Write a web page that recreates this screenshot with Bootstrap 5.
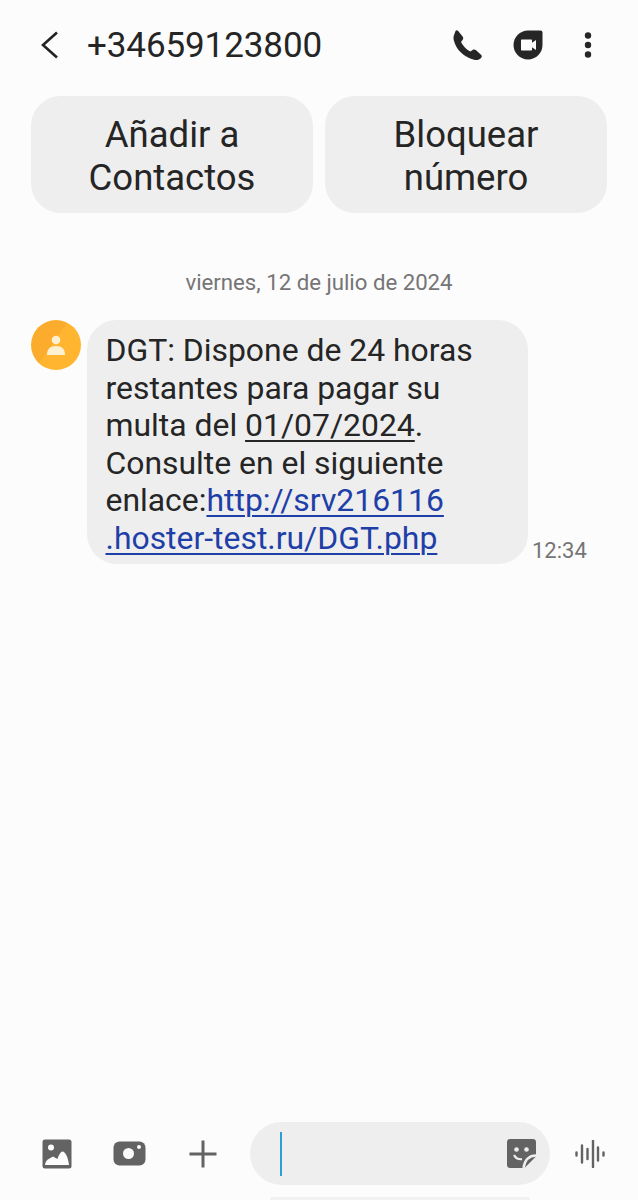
<!DOCTYPE html>
<html lang="es">
<head>
  <meta charset="UTF-8">
  <meta name="viewport" content="width=device-width, initial-scale=1.0">
  <title>Mensajes</title>
  <link href="https://cdn.jsdelivr.net/npm/bootstrap@5.3.0/dist/css/bootstrap.min.css" rel="stylesheet">
  <style>
    body {
      background: #fcfcfc;
      font-family: Roboto, "Liberation Sans", sans-serif;
      color: #252525;
      overflow: hidden;
    }
    .screen {
      height: 1200px;
      position: relative;
    }
    .top-bar {
      height: 90px;
      padding: 0 45px 0 39px;
    }
    .phone-title {
      font-size: 35px;
      line-height: 1;
      margin-left: 28px;
      letter-spacing: -0.1px;
    }
    .top-icons {
      gap: 30px;
    }
    .menu-dots {
      margin-left: 10px;
    }
    .action-row {
      padding: 6px 31px 0;
      gap: 12px;
    }
    .action-btn {
      width: 282px;
      height: 117px;
      background: #eeeeee;
      border: 0;
      border-radius: 30px;
      font-size: 36.5px;
      line-height: 43px;
      color: #252525;
      padding: 3px 20px 0;
    }
    .date-line {
      font-size: 22.2px;
      line-height: 26px;
      color: #757575;
      margin-top: 56px;
      text-align: center;
    }
    .msg-row {
      padding-left: 31px;
      margin-top: 25px;
    }
    .avatar {
      width: 50px;
      height: 50px;
      border-radius: 50%;
      background: linear-gradient(125deg, #fbac2c 0 45%, #ffb52f 45%);
      flex: none;
    }
    .bubble {
      width: 441px;
      height: 244px;
      margin-left: 6px;
      background: #eeeeee;
      border-radius: 30px;
      padding: 12px 0 0 18.5px;
      font-size: 31.9px;
      line-height: 37.6px;
      white-space: nowrap;
    }
    .bubble u {
      text-underline-offset: 4px;
      text-decoration-thickness: 2px;
    }
    .bubble a {
      color: #1f3fa8;
      text-underline-offset: 4px;
      text-decoration-thickness: 2px;
    }
    .msg-time {
      font-size: 22px;
      line-height: 26px;
      color: #757575;
      margin-left: 4px;
    }
    .composer {
      position: absolute;
      left: 0;
      right: 0;
      bottom: 15px;
      height: 63px;
      padding-left: 42px;
    }
    .composer-icons {
      gap: 41px;
    }
    .plus-icon {
      margin-left: 2px;
    }
    .input-pill {
      width: 300px;
      height: 63px;
      margin-left: 33px;
      background: #eeeeee;
      border-radius: 32px;
      padding: 0 14px 0 30px;
    }
    .text-cursor {
      width: 2px;
      height: 44px;
      background: #2a9fd0;
    }
    .voice-icon {
      margin-left: 25px;
    }
    .next-sliver {
      position: absolute;
      left: 270px;
      bottom: 0;
      width: 260px;
      height: 3px;
      background: #f1f1f1;
      border-radius: 3px 3px 0 0;
    }
  </style>
</head>
<body>
  <div class="screen">
    <div class="top-bar d-flex align-items-center">
      <svg width="20" height="28" viewBox="0 0 20 28"><path d="M18 1.5 4 14l14 12.5" fill="none" stroke="#222" stroke-width="2.6"/></svg>
      <div class="phone-title flex-grow-1">+34659123800</div>
      <div class="top-icons d-flex align-items-center">
        <svg width="30" height="30" viewBox="0 0 30 30"><path d="M5 .8 9.600 6.600c.8 1 .8 2.200.1 3.100L8 12c1.500 3.400 5.200 7.400 9.300 9.600l2.300-1.700c1-.7 2.300-.6 3.200.2l5.200 4.600c1 .9 1 2.300 0 3.300l-1.200 1c-1.300 1-3 1.400-4.800.9C10.500 27.300 3.200 19.500.8 10.200.2 7.600.5 5.700 1.500 3.800L2.400 1.200C3 0 4.200 0 5 .8Z" fill="#262626"/></svg>
        <svg width="30" height="30" viewBox="0 0 30 30"><path d="M15 .5h12.500c1.100 0 2 .9 2 2V15c0 8-6.500 14.500-14.500 14.500S.5 23 .5 15 7 .5 15 .5Z" fill="#262626"/><path d="M8 10.500c0-.6.4-1 1-1h9c.6 0 1 .4 1 1v2.300l4-2.800v10l-4-2.800v2.300c0 .6-.4 1-1 1H9c-.6 0-1-.4-1-1Z" fill="#fcfcfc"/></svg>
        <svg class="menu-dots" width="10" height="30" viewBox="0 0 10 30"><circle cx="5" cy="5.500" r="3.200" fill="#262626"/><circle cx="5" cy="15" r="3.200" fill="#262626"/><circle cx="5" cy="24.500" r="3.200" fill="#262626"/></svg>
      </div>
    </div>

    <div class="action-row d-flex">
      <button class="action-btn" type="button">Añadir a<br>Contactos</button>
      <button class="action-btn" type="button">Bloquear<br>número</button>
    </div>

    <div class="date-line">viernes, 12 de julio de 2024</div>

    <div class="msg-row d-flex align-items-start">
      <div class="avatar d-flex align-items-center justify-content-center">
        <svg width="18" height="20" viewBox="0 0 18 20"><circle cx="9" cy="5" r="4.300" fill="#fff0d2"/><path d="M0 20c0-6 3-9 9-9s9 3 9 9Z" fill="#fff0d2"/></svg>
      </div>
      <div class="bubble">DGT: Dispone de 24 horas<br>restantes para pagar su<br>multa del <u>01/07/2024</u>.<br>Consulte en el siguiente<br>enlace:<a href="#">http://srv216116<br>.hoster-test.ru/DGT.php</a></div>
      <div class="msg-time align-self-end">12:34</div>
    </div>

    <div class="composer d-flex align-items-center">
      <div class="composer-icons d-flex align-items-center">
        <svg width="30" height="30" viewBox="0 0 30 30"><rect x=".5" y=".5" width="29" height="29" rx="2.500" fill="#636363"/><circle cx="9" cy="8.500" r="3" fill="#fcfcfc"/><path d="M3 26c.2-3 2-5.300 4.500-6.500C9.500 18.500 10 18 11 17.500c1.800 1 3.500 2 4.500 2.500 1-3 3-7.500 5-7.500 3 0 6 7 6.500 13.500Z" fill="#fcfcfc"/></svg>
        <svg width="33" height="25" viewBox="0 0 33 25"><rect x=".5" y=".5" width="32" height="24" rx="6" fill="#636363"/><circle cx="15.500" cy="12.500" r="5.500" fill="#fcfcfc"/><circle cx="26" cy="6" r="2" fill="#fcfcfc"/></svg>
        <svg class="plus-icon" width="28" height="28" viewBox="0 0 28 28"><path d="M14 .5v27M.5 14h27" stroke="#636363" stroke-width="3"/></svg>
      </div>
      <div class="input-pill d-flex align-items-center justify-content-between">
        <div class="text-cursor"></div>
        <svg width="29" height="29" viewBox="0 0 29 29"><path d="M3 0h23c1.700 0 3 1.300 3 3v14.500L17.500 29H3c-1.700 0-3-1.300-3-3V3c0-1.700 1.300-3 3-3Z" fill="#636363"/><circle cx="9.500" cy="10.500" r="2.300" fill="#eee"/><circle cx="19.500" cy="10.500" r="2.300" fill="#eee"/><path d="M7 16c1.500 3 4.500 4.500 8 4.200" stroke="#eee" stroke-width="2.200" fill="none"/><path d="M29 16.500c-6 0-11 3.500-12.500 12.500" stroke="#eee" stroke-width="2.500" fill="none"/></svg>
      </div>
      <svg class="voice-icon" width="30" height="28" viewBox="0 0 30 28"><path d="M1.500 12.500v3M7 5.500v17M12.500 9v10M18 .9v26.200M23 7.500v13M28.500 12.500v3" stroke="#636363" stroke-width="2.400" stroke-linecap="round"/></svg>
    </div>
    <div class="next-sliver"></div>
  </div>

  <script src="https://cdn.jsdelivr.net/npm/bootstrap@5.3.0/dist/js/bootstrap.bundle.min.js"></script>
</body>
</html>
